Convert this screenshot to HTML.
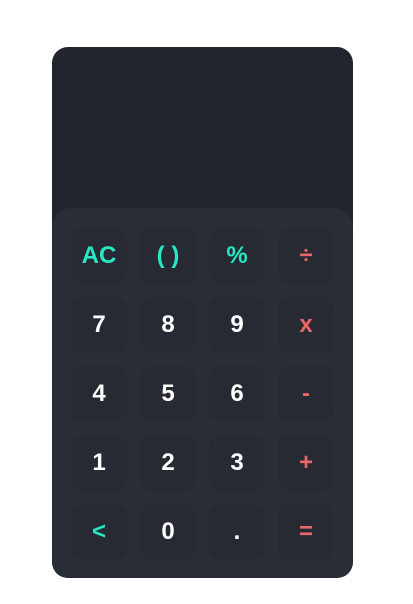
<!DOCTYPE html>
<html><head><style>
body{margin:0;background:#fff;width:413px;height:604px;position:relative;font-family:"Liberation Sans",sans-serif}
.calc{position:absolute;left:52px;top:47px;width:301px;height:531px;background:#22252d;border-radius:16px;overflow:hidden}
.pad{position:absolute;left:0;top:161px;width:301px;height:370px;background:#292d36;border-radius:20px 20px 16px 16px}
.b{position:absolute;width:56px;height:56px;border-radius:12px;background:#272a32;display:flex;align-items:center;justify-content:center;font-weight:bold;font-size:24px;color:#fff}
.g{color:#26e8c4}.r{color:#eb6666}
</style></head><body>
<div class="calc"><div class="pad">
<div class="b g" style="left:19px;top:20px">AC</div>
<div class="b g" style="left:88px;top:20px">( )</div>
<div class="b g" style="left:157px;top:20px">%</div>
<div class="b r" style="left:226px;top:20px">÷</div>
<div class="b" style="left:19px;top:89px">7</div>
<div class="b" style="left:88px;top:89px">8</div>
<div class="b" style="left:157px;top:89px">9</div>
<div class="b r" style="left:226px;top:89px">x</div>
<div class="b" style="left:19px;top:158px">4</div>
<div class="b" style="left:88px;top:158px">5</div>
<div class="b" style="left:157px;top:158px">6</div>
<div class="b r" style="left:226px;top:158px">-</div>
<div class="b" style="left:19px;top:227px">1</div>
<div class="b" style="left:88px;top:227px">2</div>
<div class="b" style="left:157px;top:227px">3</div>
<div class="b r" style="left:226px;top:227px">+</div>
<div class="b g" style="left:19px;top:296px">&lt;</div>
<div class="b" style="left:88px;top:296px">0</div>
<div class="b" style="left:157px;top:296px">.</div>
<div class="b r" style="left:226px;top:296px">=</div>
</div></div>
</body></html>
